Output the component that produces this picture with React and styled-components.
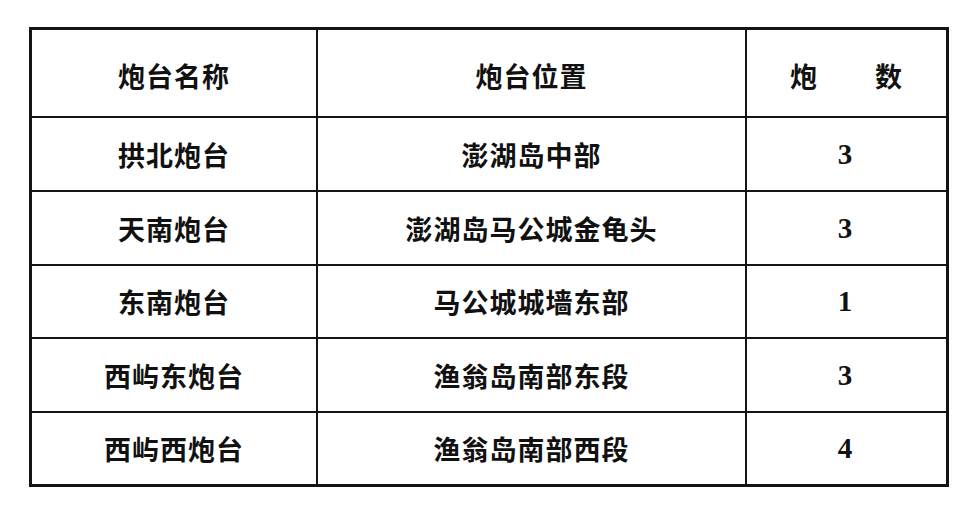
import React from 'react'
import styled, {createGlobalStyle} from 'styled-components';

const GlobalStyle = createGlobalStyle`
    html, body {
        margin: 0;
        padding: 0;
        background: #fff;
    }
`;

const Page = styled.div`
    width: 960px;
    height: 507px;
    box-sizing: border-box;
    padding: 27px 0 0 29px;
    background: #fff;
`;

const Grid = styled.div`
    display: grid;
    grid-template-columns: 286px 429px 199px;
    grid-template-rows: 88px 74px 74px 73px 74px 71px;
    width: max-content;
    border: 3px solid #141414;
`;

const Cell = styled.div`
    display: flex;
    align-items: center;
    justify-content: center;
    gap: ${props => props.$gap || 0}px;
    border-right: ${props => props.$lastCol ? 'none' : '2px solid #141414'};
    border-bottom: ${props => props.$lastRow ? 'none' : '2px solid #141414'};
    color: #111;
    font-family: ${props => props.$num
        ? '"Liberation Serif", "Times New Roman", serif'
        : '"Noto Sans CJK SC", "Noto Sans", sans-serif'};
    font-size: ${props => props.$num ? 29 : 27}px;
    font-weight: 700;
    letter-spacing: ${props => props.$num ? 0 : 1}px;
    padding-top: ${props => props.$head ? 4 : 0}px;
    padding-right: ${props => props.$num ? 3 : 0}px;
`;

const rows = [
    ['拱北炮台', '澎湖岛中部', '3'],
    ['天南炮台', '澎湖岛马公城金龟头', '3'],
    ['东南炮台', '马公城城墙东部', '1'],
    ['西屿东炮台', '渔翁岛南部东段', '3'],
    ['西屿西炮台', '渔翁岛南部西段', '4'],
]

const App = () => {
    return (
        <Page>
            <GlobalStyle/>
            <Grid>
                <Cell $head>炮台名称</Cell>
                <Cell $head>炮台位置</Cell>
                <Cell $head $lastCol $gap={57}><span>炮</span><span>数</span></Cell>
                {rows.map((row, i) => {
                    const last = i === rows.length - 1
                    return (
                        <React.Fragment key={row[0]}>
                            <Cell $lastRow={last}>{row[0]}</Cell>
                            <Cell $lastRow={last}>{row[1]}</Cell>
                            <Cell $lastRow={last} $lastCol $num>{row[2]}</Cell>
                        </React.Fragment>
                    )
                })}
            </Grid>
        </Page>
    )
}

export default App
